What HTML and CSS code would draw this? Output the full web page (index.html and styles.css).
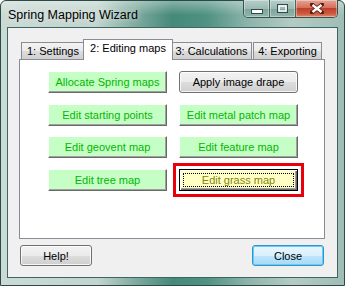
FILE: index.html
```html
<!DOCTYPE html>
<html lang="en">
<head>
  <meta charset="UTF-8">
  <title>Spring Mapping Wizard</title>
  <link rel="stylesheet" href="styles.css">
</head>
<body>

  <div class="window">
    <div class="titlebar">
      <span class="title">Spring Mapping Wizard</span>
      <div class="caption-buttons">
        <span class="cap cap-min">
          <svg width="12" height="5" viewBox="0 0 12 5"><rect x="0.5" y="0.5" width="11" height="4" fill="#fff" stroke="#2f4d48"/></svg>
        </span>
        <span class="cap cap-max">
          <svg width="11" height="9" viewBox="0 0 11 9"><rect x="0.5" y="0.5" width="10" height="8" fill="none" stroke="#2f4d48"/><rect x="2" y="2" width="7" height="5" fill="none" stroke="#fff" stroke-width="1.5"/></svg>
        </span>
        <span class="cap cap-close">
          <svg width="14" height="11" viewBox="0 0 14 11"><path d="M2 1.5 L12 9.5 M12 1.5 L2 9.5" stroke="#5a1a10" stroke-width="4" stroke-linecap="square"/><path d="M2.5 2 L11.5 9 M11.5 2 L2.5 9" stroke="#fff" stroke-width="2.4"/></svg>
        </span>
      </div>
    </div>

    <div class="client">
      <div class="tabs">
        <div class="tab tab-1">1: Settings</div>
        <div class="tab active">2: Editing maps</div>
        <div class="tab tab-3">3: Calculations</div>
        <div class="tab tab-4">4: Exporting</div>
      </div>

      <div class="tab-panel">
        <div class="map-grid">
          <button class="map-btn">Allocate Spring maps</button>
          <button class="vista-btn">Apply image drape</button>
          <button class="map-btn">Edit starting points</button>
          <button class="map-btn">Edit metal patch map</button>
          <button class="map-btn">Edit geovent map</button>
          <button class="map-btn">Edit feature map</button>
          <button class="map-btn">Edit tree map</button>
          <button class="map-btn selected"><span class="focus-rect">Edit grass map</span></button>
        </div>
      </div>

      <div class="footer">
        <button class="vista-btn small">Help!</button>
        <button class="vista-btn small default">Close</button>
      </div>
    </div>
  </div>

</body>
</html>
```

FILE: styles.css
```css
html, body {
  margin: 0;
  padding: 0;
  background: #ffffff;
}

.window {
  width: 345px;
  height: 286px;
  box-sizing: border-box;
  border: 1px solid #2c4a45;
  border-radius: 6px 6px 0 0;
  padding: 0 6px 7px 6px;
  display: flex;
  flex-direction: column;
  font-family: "Liberation Sans", Arial, sans-serif;
  background:
    linear-gradient(180deg, rgba(255,255,255,0.35) 0px, rgba(255,255,255,0) 14px),
    linear-gradient(90deg, #cbdad5 0%, #c2d4ce 28%, #7aa89c 40%, #45897a 50%, #4f9283 60%, #8db4aa 72%, #b4cbc4 85%, #9fbdb5 100%);
}

/* title bar */
.titlebar {
  height: 26px;
  display: flex;
  justify-content: space-between;
  align-items: flex-start;
}

.title {
  margin: 7px 0 0 1px;
  font-size: 12.5px;
  color: #000;
  text-shadow: 0 0 6px rgba(255,255,255,0.8);
}

.caption-buttons {
  display: flex;
  margin: -1px 0 0 0;
  border: 1px solid #34544e;
  border-top: none;
  border-radius: 0 0 5px 5px;
  overflow: hidden;
}

.cap {
  height: 17px;
  display: flex;
  align-items: center;
  justify-content: center;
  box-shadow: inset 0 0 0 1px rgba(255,255,255,0.35);
}

.cap-min,
.cap-max {
  width: 25px;
  background: linear-gradient(180deg, #b9cfc9 0%, #9cbab2 50%, #7ea49a 51%, #93b5ac 100%);
  border-right: 1px solid #46665f;
}

.cap-min svg {
  margin-top: 5px;
}

.cap-close {
  width: 41px;
  background: linear-gradient(180deg, #e4a596 0%, #d6705c 45%, #c0402a 50%, #cc5a40 80%, #e08a6c 100%);
}

/* client area */
.client {
  flex: 1;
  background: #f0f0f0;
  border: 1px solid #3c6660;
  padding: 11px 12px 0 11px;
  display: flex;
  flex-direction: column;
}

.tabs {
  height: 20px;
  display: flex;
  align-items: flex-end;
  padding-left: 2px;
  position: relative;
  z-index: 1;
}

.tab {
  height: 16px;
  box-sizing: content-box;
  border: 1px solid #898c95;
  border-bottom: none;
  background: linear-gradient(180deg, #f3f3f3 0%, #ebebeb 50%, #dddddd 51%, #cfcfcf 100%);
  font-size: 11px;
  line-height: 17px;
  text-align: center;
  color: #000;
}

.tab-1 { width: 62px; }
.tab-3 { width: 79px; }
.tab-4 { width: 67px; margin-left: 1px; }

.tab.active {
  height: 20px;
  width: 88px;
  margin: 0 -2px -1px -2px;
  background: #ffffff;
  line-height: 17px;
  position: relative;
}

.tab-panel {
  height: 178px;
  background: #ffffff;
  border: 1px solid #898c95;
}

.map-grid {
  display: grid;
  grid-template-columns: 119px 119px;
  grid-auto-rows: 22px;
  column-gap: 12px;
  row-gap: 10.7px;
  padding: 11px 0 0 28px;
}

button {
  font-family: "Liberation Sans", Arial, sans-serif;
  font-size: 11px;
  margin: 0;
  padding: 0;
  cursor: pointer;
}

.map-btn {
  background: #c6ffc6;
  color: #00b800;
  border-style: solid;
  border-width: 1px;
  border-color: #ffffff #696969 #696969 #ffffff;
  box-shadow: inset -1px -1px 0 #a0a0a0;
}

.map-btn.selected {
  background: #ffffc4;
  color: #85850a;
  border: 1px solid #000;
  box-shadow: inset 1px 1px 0 #ffffff, inset -1px -1px 0 #696969, inset -2px -2px 0 #a0a0a0;
  padding: 3px;
  display: flex;
  outline: 3px solid #e8000b;
  outline-offset: 3px;
}

.focus-rect {
  flex: 1;
  border: 1px dotted #000;
  display: flex;
  align-items: center;
  justify-content: center;
}

.vista-btn {
  color: #000;
  border: 1px solid #707070;
  border-radius: 3px;
  background: linear-gradient(180deg, #f2f2f2 0%, #ebebeb 50%, #dddddd 51%, #cfcfcf 100%);
  box-shadow: inset 0 0 0 1px rgba(255,255,255,0.8);
}

.vista-btn.default {
  border-color: #3c8fc8;
  background: linear-gradient(180deg, #eaf6fd 0%, #d9f0fc 50%, #bee6fd 51%, #a7d9f5 100%);
  box-shadow: inset 0 0 0 1px #5fd0f8;
}

.footer {
  display: flex;
  justify-content: space-between;
  margin-top: 6px;
  padding: 0 1px;
}

.vista-btn.small {
  width: 72px;
  height: 21px;
}
```
